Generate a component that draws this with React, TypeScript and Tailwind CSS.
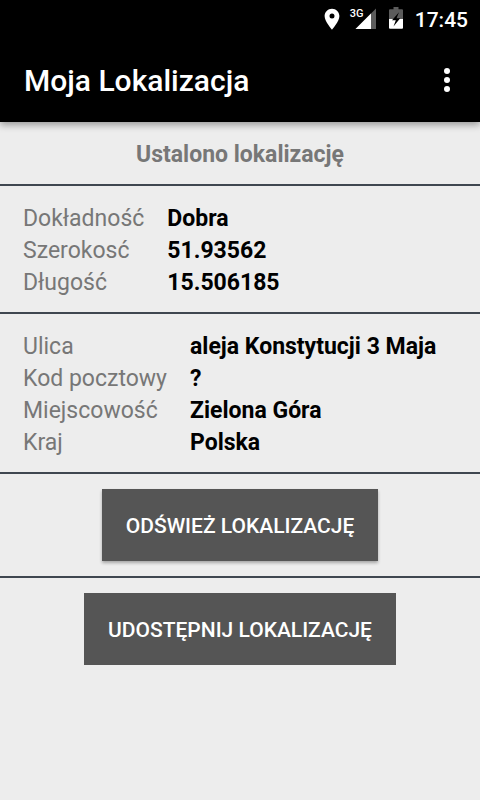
type Row = { label: string; value: string };

const position: Row[] = [
  { label: "Dokładność", value: "Dobra" },
  { label: "Szerokosć", value: "51.93562" },
  { label: "Długość", value: "15.506185" },
];

const address: Row[] = [
  { label: "Ulica", value: "aleja Konstytucji 3 Maja" },
  { label: "Kod pocztowy", value: "?" },
  { label: "Miejscowość", value: "Zielona Góra" },
  { label: "Kraj", value: "Polska" },
];

function StatusBar() {
  return (
    <div className="flex h-10 items-center justify-end pr-3 text-white">
      <svg width="16" height="26" viewBox="0 0 16 26" fill="currentColor" className="mr-[10px]" aria-hidden="true">
        <path
          fillRule="evenodd"
          d="M8 1.700C3.900 1.700.6 5 .6 9.100c0 5.400 7.400 13.600 7.400 13.600s7.400-8.200 7.400-13.600C15.400 5 12.100 1.700 8 1.700Zm0 9.900a2.500 2.500 0 1 1 0-5 2.500 2.500 0 0 1 0 5Z"
        />
      </svg>
      <div className="relative mr-3 h-[26px] w-[27px]">
        <span className="absolute top-px left-0 text-[11px] leading-[11px] font-medium">3G</span>
        <svg width="27" height="26" viewBox="0 0 27 26" aria-hidden="true">
          <path d="M26 1.500V22H5.500Z" fill="#5c5c5c" />
          <path d="M21 6.500V22H5.500Z" fill="#fff" />
        </svg>
      </div>
      <svg width="14" height="26" viewBox="0 0 14 26" className="mr-3" aria-hidden="true">
        <path d="M4.500 0h5v2.200H13a1 1 0 0 1 1 1V12H0V3.200a1 1 0 0 1 1-1h3.500Z" fill="#5c5c5c" />
        <path d="M0 12h14v8.800a1 1 0 0 1-1 1H1a1 1 0 0 1-1-1Z" fill="#fff" />
        <path d="M10 5.200 3 13.200H6.800L4.500 19.500 11.200 11.200H7.500Z" fill="#000" />
      </svg>
      <time className="text-[21px] leading-6 font-medium">17:45</time>
    </div>
  );
}

function Details({ rows }: { rows: Row[] }) {
  return (
    <section className="border-b-2 border-[#3f4750] px-[23px] pt-[17px] pb-[13px]">
      <table className="text-left text-[23px] leading-8">
        <tbody>
          {rows.map((row) => (
            <tr key={row.label}>
              <th scope="row" className="p-0 pr-[23px] font-normal text-[#777777]">
                {row.label}
              </th>
              <td className="p-0 font-bold text-black">{row.value}</td>
            </tr>
          ))}
        </tbody>
      </table>
    </section>
  );
}

export default function App() {
  return (
    <div className="min-h-screen bg-[#ededed] font-['Roboto',sans-serif]">
      <header className="bg-black text-white shadow-[0_3px_7px_rgba(0,0,0,0.35)]">
        <StatusBar />
        <div className="flex h-[82px] items-center justify-between pr-[18px] pl-6">
          <h1 className="text-[30px] leading-9 font-medium">Moja Lokalizacja</h1>
          <button type="button" aria-label="Menu" className="flex h-12 w-[30px] items-center justify-center">
            <svg width="6" height="26" viewBox="0 0 6 26" fill="currentColor" aria-hidden="true">
              <circle cx="3" cy="3" r="3" />
              <circle cx="3" cy="12" r="3" />
              <circle cx="3" cy="21" r="3" />
            </svg>
          </button>
        </div>
      </header>

      <main>
        <p className="border-b-2 border-[#3f4750] pt-[17px] pb-[13px] text-center text-[23px] leading-8 font-bold text-[#777777]">
          Ustalono lokalizację
        </p>
        <Details rows={position} />
        <Details rows={address} />
        <div className="flex justify-center border-b-2 border-[#3f4750] py-[15px]">
          <button type="button" className="h-[72px] bg-[#555555] px-6 pt-[3px] text-[21px] font-medium text-white shadow-[0_2px_3px_rgba(0,0,0,0.3)]">
            ODŚWIEŻ LOKALIZACJĘ
          </button>
        </div>
        <div className="flex justify-center py-[15px]">
          <button type="button" className="h-[72px] bg-[#555555] px-6 pt-[3px] text-[21px] font-medium text-white">
            UDOSTĘPNIJ LOKALIZACJĘ
          </button>
        </div>
      </main>
    </div>
  );
}
